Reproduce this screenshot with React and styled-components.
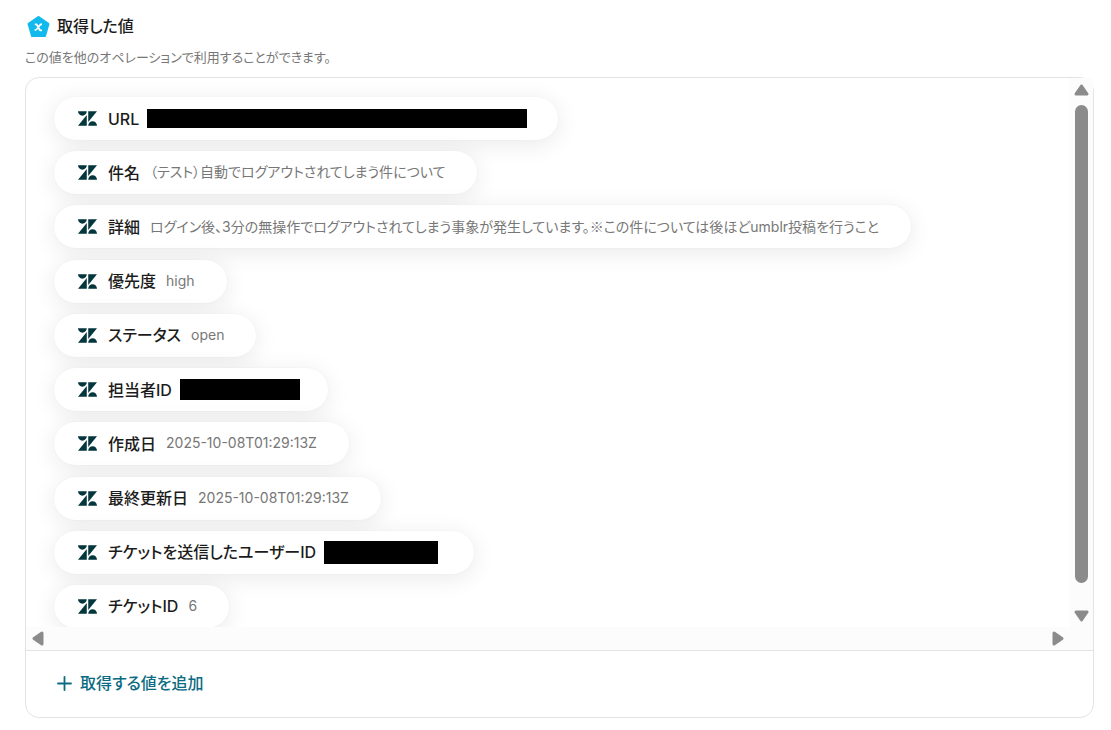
import styled, { createGlobalStyle } from 'styled-components';

const GlobalStyle = createGlobalStyle`
  * {
    box-sizing: border-box;
  }

  body {
    margin: 0;
    background: #fff;
    color: #1c1c1c;
    font-family: Inter, 'Noto Sans CJK JP', sans-serif;
    font-feature-settings: 'palt';
  }
`;

const Page = styled.main`
  padding: 14px 17px 12px 25px;
`;

const Header = styled.header`
  display: flex;
  align-items: flex-start;
  gap: 6px;
  padding-left: 1px;
`;

const Title = styled.h1`
  margin: 0;
  font-size: 16px;
  font-weight: 500;
  line-height: 24px;
`;

const Description = styled.p`
  margin: 8px 0 10px;
  color: #777;
  font-size: 13px;
  line-height: 20px;
`;

const Panel = styled.section`
  border: 1px solid #e3e3e3;
  border-radius: 14px;
`;

const ScrollArea = styled.div`
  display: grid;
  grid-template-columns: minmax(0, 1fr) 23px;
  grid-template-rows: 549px 23px;
  border-bottom: 1px solid #e3e3e3;
`;

const Viewport = styled.div`
  overflow: hidden;
  padding: 19px 28px 0;
`;

const ValueList = styled.ul`
  display: grid;
  align-content: space-between;
  justify-items: start;
  min-height: 531px;
  margin: 0;
  padding: 0;
  list-style: none;
`;

const Pill = styled.li`
  display: flex;
  align-items: center;
  height: 43px;
  padding: 0 32px 0 24px;
  border-radius: 22px;
  background: #fff;
  box-shadow: 0 4px 24px rgba(0, 0, 0, 0.09), 0 0 2px rgba(0, 0, 0, 0.04);
  white-space: nowrap;
`;

const Label = styled.span`
  margin-left: 11px;
  font-size: 16px;
  font-weight: 500;
  line-height: 24px;
`;

const Value = styled.span`
  margin-left: 10px;
  padding-bottom: 1px;
  color: #777;
  font-size: 14px;
  line-height: 20px;
`;

const JapaneseMark = styled.span`
  font-family: 'Noto Sans CJK JP', sans-serif;
`;

const Redacted = styled.span`
  width: ${({ $slot }) => $slot}px;
  margin-left: 8px;

  &::before {
    display: block;
    width: ${({ $width }) => $width}px;
    height: ${({ $height }) => $height}px;
    background: #000;
    content: '';
  }
`;

const Rail = styled.div`
  display: flex;
  flex-direction: ${({ $horizontal }) => ($horizontal ? 'row' : 'column')};
  align-items: center;
  justify-content: space-between;
  padding: ${({ $horizontal }) => ($horizontal ? '0 6px' : '6px 0 5px')};
  background: #fcfcfc;
`;

const RailCorner = styled.div`
  background: #fcfcfc;
`;

const ArrowButton = styled.button`
  display: flex;
  padding: 0;
  border: 0;
  background: none;
  color: #8b8b8b;
  cursor: pointer;
`;

const Thumb = styled.div`
  flex: 1;
  width: 13px;
  margin: 9px 0 27px;
  border-radius: 7px;
  background: #8b8b8b;
`;

const Footer = styled.footer`
  padding: 20px 31px 21px;
`;

const AddButton = styled.button`
  display: flex;
  align-items: center;
  gap: 8px;
  padding: 0;
  border: 0;
  background: none;
  color: #0b6b83;
  font: inherit;
  font-size: 16px;
  font-weight: 500;
  line-height: 25px;
  cursor: pointer;
`;

const values = [
  { label: 'URL', redacted: { slot: 379, width: 380, height: 19 } },
  { label: '件名', value: '（テスト）自動でログアウトされてしまう件について' },
  {
    label: '詳細',
    value: (
      <>
        ログイン後、3分の無操作でログアウトされてしまう事象が発生しています。
        <JapaneseMark>※</JapaneseMark>
        この件については後ほどumblr投稿を行うこと
      </>
    ),
  },
  { label: '優先度', value: 'high' },
  { label: 'ステータス', value: 'open' },
  { label: '担当者ID', redacted: { slot: 116, width: 120, height: 21 } },
  { label: '作成日', value: '2025-10-08T01:29:13Z' },
  { label: '最終更新日', value: '2025-10-08T01:29:13Z' },
  {
    label: 'チケットを送信したユーザーID',
    redacted: { slot: 118, width: 114, height: 23 },
  },
  { label: 'チケットID', value: '6' },
];

const PentagonIcon = () => (
  <svg width='25' height='25' viewBox='0 0 25 25' aria-hidden='true'>
    <path
      d='M12.5 3.3 22.2 10 18.7 21.8H6.3L2.8 10Z'
      fill='#12b9ec'
      stroke='#12b9ec'
      strokeWidth='2.6'
      strokeLinejoin='round'
    />
    <path
      d='M8.800 10.300h1.700l3.500 6h2M16 10.200c-1.500 0-2.100.6-3 2l-1.200 1.900c-.9 1.400-1.500 2.100-3.200 2.100'
      fill='none'
      stroke='#fff'
      strokeWidth='1.7'
      strokeLinejoin='round'
    />
  </svg>
);

const ZendeskIcon = () => (
  <svg width='19' height='15' viewBox='0 2.9 24 18.2' aria-hidden='true'>
    <path
      d='M12.914 2.904V16.29L24 2.905H12.914zM0 2.906C0 5.966 2.483 8.45 5.543 8.45s5.542-2.484 5.543-5.544H0zm11.086 4.807L0 21.096h11.086V7.713zm7.37 7.84c-3.063 0-5.542 2.48-5.542 5.543H24c0-3.06-2.48-5.543-5.543-5.543z'
      fill='#03363d'
    />
  </svg>
);

const arrowPaths = {
  up: 'M7.5 2 13 10H2Z',
  down: 'M7.5 10 13 2H2Z',
  left: 'M2 7.5 10 2V13Z',
  right: 'M10 7.5 2 2V13Z',
};

const Arrow = ({ label, direction }) => {
  const sideways = direction === 'left' || direction === 'right';

  return (
    <ArrowButton type='button' aria-label={label}>
      <svg width={sideways ? 12 : 15} height={sideways ? 15 : 12}>
        <path
          d={arrowPaths[direction]}
          fill='currentColor'
          stroke='currentColor'
          strokeWidth='3'
          strokeLinejoin='round'
        />
      </svg>
    </ArrowButton>
  );
};

const PlusIcon = () => (
  <svg width='15' height='15' viewBox='0 0 15 15' aria-hidden='true'>
    <path
      d='M7.5 1v13M1 7.5h13'
      fill='none'
      stroke='currentColor'
      strokeWidth='1.8'
      strokeLinecap='round'
    />
  </svg>
);

const App = () => {
  return (
    <>
      <GlobalStyle />
      <Page>
        <Header>
          <PentagonIcon />
          <Title>取得した値</Title>
        </Header>
        <Description>この値を他のオペレーションで利用することができます。</Description>

        <Panel>
          <ScrollArea>
            <Viewport>
              <ValueList>
                {values.map(({ label, value, redacted }) => (
                  <Pill key={label}>
                    <ZendeskIcon />
                    <Label>{label}</Label>
                    {value && <Value>{value}</Value>}
                    {redacted && (
                      <Redacted
                        $slot={redacted.slot}
                        $width={redacted.width}
                        $height={redacted.height}
                      />
                    )}
                  </Pill>
                ))}
              </ValueList>
            </Viewport>
            <Rail>
              <Arrow label='上へ' direction='up' />
              <Thumb />
              <Arrow label='下へ' direction='down' />
            </Rail>
            <Rail $horizontal>
              <Arrow label='左へ' direction='left' />
              <Arrow label='右へ' direction='right' />
            </Rail>
            <RailCorner />
          </ScrollArea>

          <Footer>
            <AddButton type='button'>
              <PlusIcon />
              取得する値を追加
            </AddButton>
          </Footer>
        </Panel>
      </Page>
    </>
  );
};

export default App;
